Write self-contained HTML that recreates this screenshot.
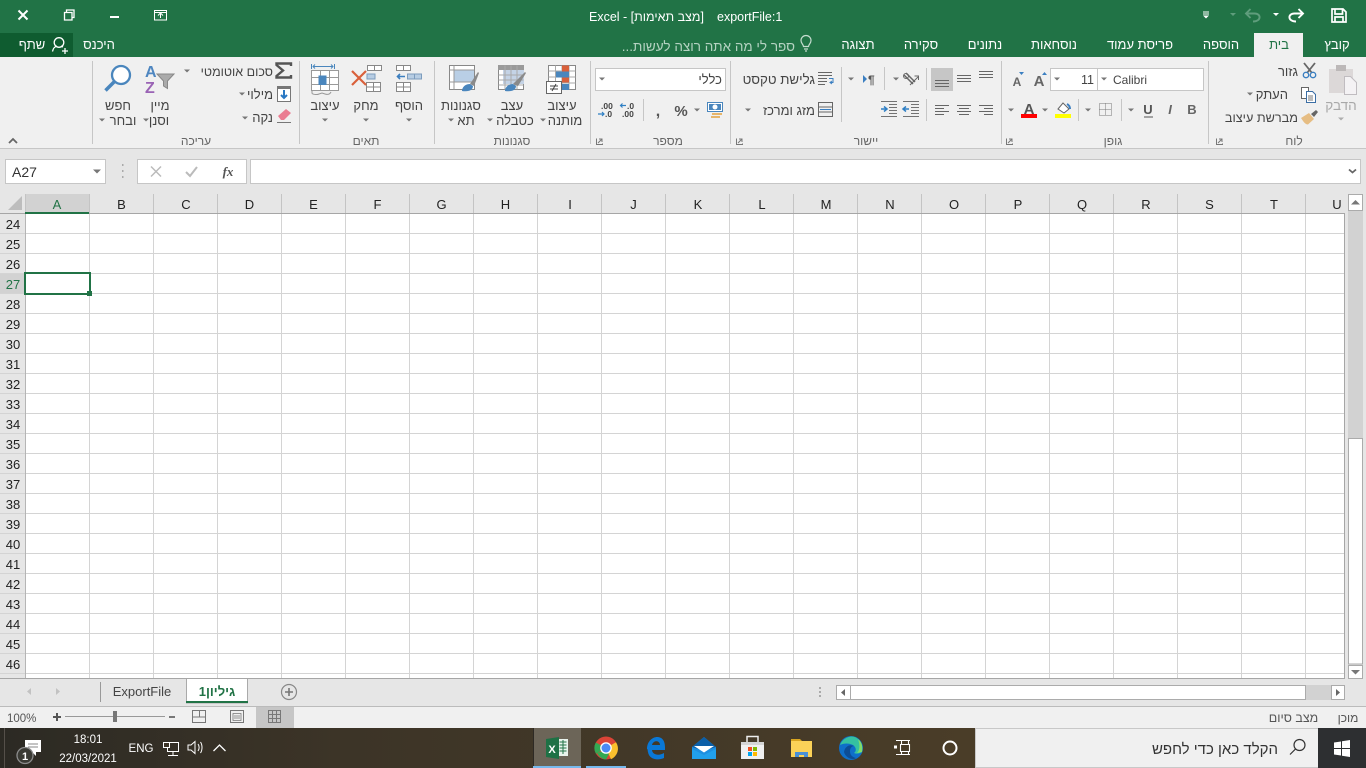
<!DOCTYPE html>
<html lang="he"><head><meta charset="utf-8"><title>Excel</title>
<style>
html,body{margin:0;padding:0;width:1366px;height:768px;overflow:hidden;background:#fff}
svg{display:block;position:absolute;left:0;top:0}
text{font-family:"Liberation Sans","DejaVu Sans",sans-serif;font-size:13px;fill:#444}
.m{text-anchor:middle}.e{text-anchor:end}
.tab{fill:#fff;text-anchor:middle;font-size:13px}
.g{fill:#666;font-size:12px;text-anchor:middle}
.h{fill:#222;text-anchor:middle;font-size:13px}
.tb{fill:#fff;font-size:11.5px;text-anchor:middle}
.d{font-size:8.5px;fill:#444;font-weight:bold}
</style></head><body>
<svg width="1366" height="768" viewBox="0 0 1366 768" xmlns="http://www.w3.org/2000/svg">
<defs>
<path id="a" d="M-3-1.500h6l-3 3z" fill="#777"/>
<linearGradient id="tbg" x1="0" x2="1" y1="0" y2="0"><stop offset="0" stop-color="#2c2a24"/><stop offset=".35" stop-color="#3c3427"/><stop offset="1" stop-color="#4a3d28"/></linearGradient>
</defs>

<!-- base colours -->
<rect width="1366" height="57" fill="#217346"/>
<rect y="57" width="1366" height="92" fill="#f0f0f0"/>
<rect y="148" width="1366" height="1" fill="#c6c6c6"/>
<rect y="149" width="1366" height="45" fill="#e6e6e6"/>

<!-- window controls -->
<path d="M18.500 10.500l9 9m0-9l-9 9" stroke="#fff" stroke-width="2" fill="none"/>
<path d="M64.500 12.500h7.500v7.500h-7.500zM66.500 12.500v-2.500h7.500v7.500h-2" stroke="#fff" fill="none" stroke-width="1.300"/>
<rect x="110" y="16" width="9" height="2" fill="#fff"/>
<path d="M154.500 10.500h12v9.500h-12zM154.500 12.500h12M160.500 18v-4M158 15.500l2.500-2.500 2.500 2.500" stroke="#fff" fill="none"/>

<!-- title -->
<text x="589" y="21" style="fill:#fff;font-size:12.500px" direction="ltr">Excel - [מצב תאימות]</text>
<text x="717" y="21" style="fill:#fff;font-size:12.500px">exportFile:1</text>

<!-- QAT -->
<path d="M1332 9h11l3 3v10h-14zM1335 9.500v4.500h7.500v-4.500M1335 22v-5h8v5" stroke="#fff" stroke-width="1.700" fill="none"/>
<path d="M1296 21.500c-8.500 0-8.500-8-1.500-8h8M1298.500 9l4.500 4.500-4.500 4.500" stroke="#fff" stroke-width="1.900" fill="none"/>
<path d="M1273 13h6l-3 3z" fill="#fff"/>
<path d="M1253 21.500c8.500 0 8.500-8 1.500-8h-8.500M1250.500 9l-4.500 4.500 4.500 4.500" stroke="#5f9d7c" stroke-width="1.900" fill="none"/>
<path d="M1230 13h6l-3 3z" fill="#5f9d7c"/>
<path d="M1203 12h6M1203 14h6" stroke="#fff"/><path d="M1203 15.500h6l-3 3z" fill="#fff"/>

<!-- tabs -->
<rect x="1254" y="33" width="49" height="24" fill="#f0f0f0"/>
<text class="tab" x="1337" y="49">קובץ</text>
<text class="tab" x="1279" y="49" style="fill:#217346">בית</text>
<text class="tab" x="1221" y="49">הוספה</text>
<text class="tab" x="1140" y="49">פריסת עמוד</text>
<text class="tab" x="1054" y="49">נוסחאות</text>
<text class="tab" x="985" y="49">נתונים</text>
<text class="tab" x="921" y="49">סקירה</text>
<text class="tab" x="858" y="49">תצוגה</text>
<text x="795" y="51" direction="rtl" style="fill:#b5d3c2;font-size:13.500px;text-anchor:start">ספר לי מה אתה רוצה לעשות...</text>
<path d="M803.500 46.500c0-2-2.500-3-2.500-6a5 5 0 0 1 10 0c0 3-2.500 4-2.500 6zM804 49h4M805 51h2" stroke="#c5dccf" fill="none" stroke-width="1.200"/>
<text class="tab" x="99" y="49">היכנס</text>
<rect y="33" width="73" height="24" fill="#0f5c30"/>
<text class="tab" x="32" y="49">שתף</text>
<circle cx="59" cy="42.500" r="4.800" fill="none" stroke="#fff" stroke-width="1.300"/>
<path d="M52.500 52.500c.5-3 2.500-5 4.500-5.500M61 47l2 1M62 52h6M65 49v6" stroke="#fff" stroke-width="1.300" fill="none" transform="translate(0 -1)"/>

<!-- group separators -->
<g fill="#c6c6c6">
<rect x="92" y="61" width="1" height="83"/><rect x="299" y="61" width="1" height="83"/><rect x="434" y="61" width="1" height="83"/><rect x="590" y="61" width="1" height="83"/><rect x="730" y="61" width="1" height="83"/><rect x="1001" y="61" width="1" height="83"/><rect x="1208" y="61" width="1" height="83"/>
<rect x="841" y="67" width="1" height="55"/><rect x="884" y="67" width="1" height="23"/><rect x="926" y="68" width="1" height="22"/><rect x="926" y="99" width="1" height="22"/><rect x="643" y="99" width="1" height="22"/><rect x="1078" y="99" width="1" height="22"/><rect x="1121" y="99" width="1" height="22"/>
</g>
<path d="M9 143l4-4 4 4" stroke="#666" stroke-width="1.800" fill="none"/>

<!-- group labels -->
<text class="g" x="196" y="145">עריכה</text>
<text class="g" x="366" y="145">תאים</text>
<text class="g" x="512" y="145">סגנונות</text>
<text class="g" x="668" y="145">מספר</text>
<text class="g" x="866" y="145">יישור</text>
<text class="g" x="1113" y="145">גופן</text>
<text class="g" x="1294" y="145">לוח</text>
<g stroke="#777" fill="none">
<path d="M596.500 138.500v6h6v-1M598 143l4-4m-3 0h3v3"/><path d="M736.500 138.500v6h6v-1M738 143l4-4m-3 0h3v3"/><path d="M1006.500 138.500v6h6v-1M1008 143l4-4m-3 0h3v3"/><path d="M1216.500 138.500v6h6v-1M1218 143l4-4m-3 0h3v3"/>
</g>

<!-- Editing -->
<path d="M291 66v-2.500h-14.500v1.500l6.500 5.500-6.500 5.500v1.500h14.500v-2.500" fill="none" stroke="#555" stroke-width="2.400"/>
<text class="e" x="273" y="76" style="font-size:12.500px">סכום אוטומטי</text><use href="#a" x="187" y="71"/>
<rect x="277.500" y="86.500" width="13" height="15" fill="#fff" stroke="#777"/><rect x="277" y="86" width="14" height="3" fill="#777"/>
<path d="M284 90v8M281 95l3 3 3-3" stroke="#2a78c3" stroke-width="2" fill="none"/>
<text class="e" x="273" y="99">מילוי</text><use href="#a" x="242" y="94"/>
<path d="M278 116l8-7 5 4-7 7h-3z" fill="#ea7d92"/><path d="M277 122.500h14" stroke="#777"/>
<text class="e" x="273" y="122">נקה</text><use href="#a" x="245" y="118"/>

<text x="145" y="77" style="font-size:16px;font-weight:bold;fill:#4e86c0">A</text>
<text x="145" y="93" style="font-size:16px;font-weight:bold;fill:#9a63b5">Z</text>
<path d="M157 74h17l-6.500 7v7.500l-4-2.500v-5z" fill="#aaa" stroke="#888"/>
<text class="m" x="160" y="110">מיין</text><text class="m" x="159" y="125">וסנן</text><use href="#a" x="146" y="120"/>

<circle cx="121" cy="75" r="9" fill="#fff" stroke="#4a86bd" stroke-width="2.300"/>
<path d="M114.500 81.500l-9 9" stroke="#4a86bd" stroke-width="3.500"/>
<text class="m" x="118" y="110">חפש</text><text class="m" x="123" y="125">ובחר</text><use href="#a" x="102" y="120"/>

<!-- Cells -->
<path d="M311.500 70.500h27v20h-27zM320.500 70.500v20M329.500 70.500v20M311.500 77.500h27M311.500 84.500h27" fill="#fff" stroke="#999"/>
<rect x="318.500" y="75.500" width="8" height="9.500" fill="#4a86bd"/>
<path d="M311.500 64v5M334.500 64v5" stroke="#4a86bd"/><path d="M313 66.500h20M315 64.500l-2 2 2 2M331 64.500l2 2-2 2" stroke="#4a86bd" fill="none"/>
<path d="M312 91v2c0 1.500 5 2 7 1l3-1 3 1c3 1 5 0 6-2" stroke="#999" fill="none"/>
<text class="m" x="325" y="110">עיצוב</text><use href="#a" x="325" y="120"/>

<g stroke="#888" fill="#fff"><path d="M367.500 65.500h14v5h-14zM374.500 65.500v5M366.500 82.500h14v9h-14zM373.500 82.500v9M366.500 87h14"/></g>
<path d="M367 74h8v5h-8z" fill="#b7cde3" stroke="#7c9cbd"/>
<path d="M352 71l14 14M366 71l-14 14" stroke="#d9603b" stroke-width="2.200"/>
<text class="m" x="366" y="110">מחק</text><use href="#a" x="366" y="120"/>

<g stroke="#888" fill="#fff"><path d="M396.500 65.500h14v5h-14zM403.500 65.500v5M396.500 82.500h14v9h-14zM403.500 82.500v9M396.500 87h14"/></g>
<path d="M407.500 74h14v5h-14zM414.500 74v5" fill="#b7cde3" stroke="#7c9cbd"/>
<path d="M405 76.500h-7M400 74l-2.500 2.500 2.500 2.500" stroke="#3c7fc0" stroke-width="1.600" fill="none"/>
<text class="m" x="409" y="110">הוסף</text><use href="#a" x="409" y="120"/>

<!-- Styles -->
<path d="M449.500 65.500h25v24h-25z" fill="#fff" stroke="#888"/>
<rect x="454" y="70" width="20" height="12" fill="#b9cfe6"/>
<path d="M449.500 70h25M449.500 82h25M454 65.500v24" stroke="#999" fill="none"/>
<path d="M462 90c1-4 4-6 8-6l3 2c0 4-4 6-11 5z" fill="#4a86bd"/><path d="M470 84l8-12 1 1-5 13" fill="#8a8a8a"/>
<text class="m" x="461" y="110">סגנונות</text><text class="m" x="466" y="125">תא</text><use href="#a" x="451" y="120"/>

<path d="M498.500 65.500h25v24h-25z" fill="#fff" stroke="#888"/>
<rect x="498" y="65" width="26" height="5" fill="#9a9a9a"/>
<rect x="503" y="70" width="21" height="14" fill="#c4d3e6"/>
<path d="M498.500 75h25M498.500 80h25M498.500 85h25M505 65.500v24M511 65.500v24M517 65.500v24" stroke="#aaa" fill="none"/>
<path d="M505 90c1-4 4-6 8-6l3 2c0 4-4 6-11 5z" fill="#4a86bd"/><path d="M513 84l12-12 1 1-8 13" fill="#8a8a8a"/>
<text class="m" x="512" y="110">עצב</text><text class="m" x="515" y="125">כטבלה</text><use href="#a" x="490" y="120"/>

<path d="M548.500 65.500h27v24h-27z" fill="#fff" stroke="#888"/>
<path d="M548.500 71h27M548.500 77h27M548.500 83h27M555.500 65.500v24M562 65.500v24M569 65.500v24" stroke="#aaa" fill="none"/>
<rect x="562" y="65.500" width="7" height="6" fill="#d9603b"/><rect x="556" y="71.500" width="13" height="6" fill="#4a86bd"/><rect x="562" y="77.500" width="7" height="5" fill="#d9603b"/><rect x="562" y="84" width="7" height="6" fill="#4a86bd"/>
<rect x="546.500" y="81.500" width="15" height="12" fill="#fff" stroke="#666"/>
<path d="M550 86h8M550 89h8M556 84l-4 7" stroke="#444" fill="none"/>
<text class="m" x="562" y="110">עיצוב</text><text class="m" x="565" y="125">מותנה</text><use href="#a" x="543" y="120"/>

<!-- Number -->
<rect x="595.500" y="68.500" width="130" height="22" fill="#fff" stroke="#c6c6c6"/>
<text class="e" x="722" y="84">כללי</text><use href="#a" x="602" y="79"/>
<rect x="707.500" y="102.500" width="15" height="9" fill="#fff" stroke="#4a86bd"/><rect x="709" y="104" width="12" height="6" fill="#4a86bd"/><circle cx="715" cy="107" r="2.500" fill="#fff"/>
<path d="M712 113h10v2h-10zM711 116h9v2h-9z" fill="#e7b56a"/>
<use href="#a" x="697" y="110"/>
<text class="m" x="681" y="116" style="font-size:15px;fill:#555;font-weight:bold">%</text>
<text class="m" x="658" y="116" style="font-size:16px;fill:#555;font-weight:bold">,</text>
<text x="627" y="109" class="d">.0</text><text x="622" y="117" class="d">.00</text>
<path d="M626 105.500h-5.500M622.500 103.500l-2 2 2 2" stroke="#2f7fc4" fill="none" stroke-width="1.200"/>
<text x="601" y="109" class="d">.00</text><text x="605" y="117" class="d">.0</text>
<path d="M598 114h6M602 112l2 2-2 2" stroke="#2f7fc4" fill="none" stroke-width="1.200"/>

<!-- Alignment -->
<text class="e" x="815" y="84" style="font-size:13.300px">גלישת טקסט</text>
<path d="M818 72.500h14M818 75.500h14M818 78.500h9M818 81.500h9M818 84.500h7" stroke="#666"/><path d="M829 78.500h4v4h-3M832 81l-2 1.500 2 1.500" stroke="#3b7fc1" fill="none"/>
<text class="e" x="815" y="115">מזג ומרכז</text><use href="#a" x="748" y="110"/>
<path d="M818.500 102.500h14v14h-14zM818.500 107h14M818.500 112h14" stroke="#666" fill="none"/><rect x="819" y="108" width="13" height="3" fill="#f0f0f0"/><path d="M820 109.500h11" stroke="#3b7fc1"/>
<use href="#a" x="851" y="79"/>
<path d="M863 75l4 4-4 4z" fill="#3b7fc1"/><text x="868" y="84" style="font-size:12px;font-weight:bold;fill:#555">¶</text>
<use href="#a" x="896" y="79"/>
<path d="M904 75l9 9M906 73l9 9" stroke="#666" stroke-width="1.500" fill="none"/><path d="M910 85l8-8M914.500 76h4v4" stroke="#666" fill="none"/><circle cx="906" cy="76" r="2.500" fill="none" stroke="#666"/>
<rect x="931" y="68" width="22" height="23" fill="#c6c6c6"/>
<g stroke="#666">
<path d="M935 80.500h14M935 83.500h14M935 86.500h14"/>
<path d="M957 75.500h14M957 78.500h14M957 81.500h14"/>
<path d="M979 71.500h14M979 74.500h14M979 77.500h14"/>
<path d="M935 105.500h14M935 108.500h9M935 111.500h14M935 114.500h9"/>
<path d="M957 105.500h14M959 108.500h10M957 111.500h14M959 114.500h10"/>
<path d="M979 105.500h14M984 108.500h9M979 111.500h14M984 114.500h9"/>
<path d="M889 104.500h8M889 107.500h8M889 110.500h8M889 113.500h8M881 116.500h16M881 101.500h16" opacity=".9"/>
<path d="M911 104.500h8M911 107.500h8M911 110.500h8M911 113.500h8M903 116.500h16M903 101.500h16" opacity=".9"/>
</g>
<path d="M881 109h5M884 106.500l3 2.500-3 2.500" stroke="#2f7fc4" stroke-width="1.500" fill="none"/>
<path d="M909 109h-6M906 106.500l-3 2.500 3 2.500" stroke="#2f7fc4" stroke-width="1.500" fill="none"/>

<!-- Font -->
<text class="m" x="1017" y="86" style="font-size:12px;font-weight:bold;fill:#666">A</text><path d="M1019 72h5l-2.500 3z" fill="#3b7fc1"/>
<text class="m" x="1039" y="86" style="font-size:15px;font-weight:bold;fill:#666">A</text><path d="M1042 75l2.500-3 2.500 3z" fill="#3b7fc1"/>
<rect x="1050.500" y="68.500" width="47" height="22" fill="#fff" stroke="#c6c6c6"/>
<rect x="1097.500" y="68.500" width="106" height="22" fill="#fff" stroke="#c6c6c6"/>
<use href="#a" x="1057" y="79"/><use href="#a" x="1104" y="79"/>
<text class="e" x="1094" y="84" style="font-size:12.500px">11</text>
<text x="1113" y="84" style="font-size:12px">Calibri</text>
<use href="#a" x="1011" y="110"/>
<text class="m" x="1029" y="114" style="font-size:15px;font-weight:bold;fill:#555">A</text><rect x="1021" y="114" width="16" height="4" fill="#f00"/>
<use href="#a" x="1045" y="110"/>
<path d="M1058 109l5-6 6 6-5 4z" fill="#fff" stroke="#666"/><path d="M1067 104c2 1 3 3 3 5" stroke="#3b7fc1" stroke-width="2" fill="none"/>
<rect x="1055" y="114" width="16" height="4" fill="#ff0"/>
<use href="#a" x="1088" y="110"/>
<rect x="1099.500" y="103.500" width="12" height="12" fill="none" stroke="#777" stroke-dasharray="1 1"/><path d="M1105.500 103.500v12M1099.500 109.500h12" stroke="#777" stroke-dasharray="1 1" fill="none"/>
<use href="#a" x="1131" y="110"/>
<text class="m" x="1148" y="114" style="font-size:13px;font-weight:bold;fill:#555">U</text><path d="M1144 117h9" stroke="#555"/>
<text class="m" x="1170" y="114" style="font-size:13px;font-weight:bold;font-style:italic;fill:#666">I</text>
<text class="m" x="1192" y="114" style="font-size:13px;font-weight:bold;fill:#666">B</text>

<!-- Clipboard -->
<path d="M1329 69h24v24h-24z" fill="#dcd8d8"/><rect x="1336" y="65" width="10" height="6" fill="#bcb8b8"/>
<path d="M1344.500 76.500h6l6 6v12h-12z" fill="#f4f2f4" stroke="#c0bcc0"/>
<text class="m" x="1341" y="110" style="fill:#a8a8a8;font-size:13.500px">הדבק</text><use href="#a" x="1341" y="119" opacity=".55"/>
<text class="e" x="1298" y="76">גזור</text>
<path d="M1304 63l8 10M1315 63l-8 10" stroke="#666" stroke-width="1.800"/><circle cx="1306" cy="75" r="2.700" fill="none" stroke="#3b7fc1" stroke-width="1.400"/><circle cx="1313" cy="75" r="2.700" fill="none" stroke="#3b7fc1" stroke-width="1.400"/>
<text class="e" x="1288" y="99">העתק</text><use href="#a" x="1250" y="94"/>
<path d="M1301.500 87.500h7v11h-7z" fill="#fff" stroke="#666"/><path d="M1306.500 91.500h6l3 3v8h-9z" fill="#fff" stroke="#3b6ea5"/><path d="M1308 96h5M1308 98h5M1308 100h5" stroke="#777"/>
<text class="e" x="1298" y="122" style="font-size:12.700px">מברשת עיצוב</text>
<path d="M1301 118l8-5 5 6-6 5.500c-3 0-5-3.500-7-6.500z" fill="#e6bd83"/><path d="M1311 114l5-4 2 2-4 5z" fill="#666"/>

<!-- Formula bar -->
<rect x="5.500" y="159.500" width="100" height="24" fill="#fff" stroke="#c6c6c6"/>
<text x="12" y="177" style="font-size:14px;fill:#333">A27</text>
<path d="M93 169.500h8l-4 4z" fill="#777"/>
<path d="M122 164h1.500v2H122zM122 170h1.500v2H122zM122 176h1.500v2H122z" fill="#aaa"/>
<rect x="137.500" y="159.500" width="109" height="24" fill="#fff" stroke="#c6c6c6"/>
<path d="M151 166.500l10 10M161 166.500l-10 10" stroke="#bbb" stroke-width="1.500"/>
<path d="M186 172l4 4 7-9" stroke="#bbb" stroke-width="2" fill="none"/>
<text class="m" x="228" y="176" style="font-family:'Liberation Serif',serif;font-style:italic;font-weight:bold;font-size:13px;fill:#555">fx</text>
<rect x="250.500" y="159.500" width="1110" height="24" fill="#fff" stroke="#c6c6c6"/>
<path d="M1349 169.500l3.500 3 3.500-3" stroke="#666" stroke-width="1.800" fill="none"/>

<!-- Sheet headers -->
<rect y="194" width="1345" height="19" fill="#e6e6e6"/>
<rect x="25" y="194" width="64" height="19" fill="#d2d2d2"/>
<path d="M22 196v14H8z" fill="#bdbdbd"/>
<g fill="#c4c4c4">
<rect x="25" y="194" width="1" height="19"/><rect x="89" y="194" width="1" height="19"/><rect x="153" y="194" width="1" height="19"/><rect x="217" y="194" width="1" height="19"/><rect x="281" y="194" width="1" height="19"/><rect x="345" y="194" width="1" height="19"/><rect x="409" y="194" width="1" height="19"/><rect x="473" y="194" width="1" height="19"/><rect x="537" y="194" width="1" height="19"/><rect x="601" y="194" width="1" height="19"/><rect x="665" y="194" width="1" height="19"/><rect x="729" y="194" width="1" height="19"/><rect x="793" y="194" width="1" height="19"/><rect x="857" y="194" width="1" height="19"/><rect x="921" y="194" width="1" height="19"/><rect x="985" y="194" width="1" height="19"/><rect x="1049" y="194" width="1" height="19"/><rect x="1113" y="194" width="1" height="19"/><rect x="1177" y="194" width="1" height="19"/><rect x="1241" y="194" width="1" height="19"/><rect x="1305" y="194" width="1" height="19"/>
</g>
<rect y="213" width="25" height="466" fill="#e6e6e6"/>
<rect y="273" width="25" height="20" fill="#d2d2d2"/>
<!-- grid lines -->
<g fill="#d4d4d4">
<rect x="89" y="213" width="1" height="466"/><rect x="153" y="213" width="1" height="466"/><rect x="217" y="213" width="1" height="466"/><rect x="281" y="213" width="1" height="466"/><rect x="345" y="213" width="1" height="466"/><rect x="409" y="213" width="1" height="466"/><rect x="473" y="213" width="1" height="466"/><rect x="537" y="213" width="1" height="466"/><rect x="601" y="213" width="1" height="466"/><rect x="665" y="213" width="1" height="466"/><rect x="729" y="213" width="1" height="466"/><rect x="793" y="213" width="1" height="466"/><rect x="857" y="213" width="1" height="466"/><rect x="921" y="213" width="1" height="466"/><rect x="985" y="213" width="1" height="466"/><rect x="1049" y="213" width="1" height="466"/><rect x="1113" y="213" width="1" height="466"/><rect x="1177" y="213" width="1" height="466"/><rect x="1241" y="213" width="1" height="466"/><rect x="1305" y="213" width="1" height="466"/>
<rect y="233" width="1344" height="1"/><rect y="253" width="1344" height="1"/><rect y="273" width="1344" height="1"/><rect y="293" width="1344" height="1"/><rect y="313" width="1344" height="1"/><rect y="333" width="1344" height="1"/><rect y="353" width="1344" height="1"/><rect y="373" width="1344" height="1"/><rect y="393" width="1344" height="1"/><rect y="413" width="1344" height="1"/><rect y="433" width="1344" height="1"/><rect y="453" width="1344" height="1"/><rect y="473" width="1344" height="1"/><rect y="493" width="1344" height="1"/><rect y="513" width="1344" height="1"/><rect y="533" width="1344" height="1"/><rect y="553" width="1344" height="1"/><rect y="573" width="1344" height="1"/><rect y="593" width="1344" height="1"/><rect y="613" width="1344" height="1"/><rect y="633" width="1344" height="1"/><rect y="653" width="1344" height="1"/><rect y="673" width="1344" height="1"/>
</g>
<rect x="25" y="213" width="1" height="466" fill="#b5b5b5"/>
<rect y="213" width="1345" height="1" fill="#a6a6a6"/>
<rect x="25" y="212" width="64" height="2" fill="#217346"/>
<rect x="1344" y="213" width="1" height="466" fill="#a6a6a6"/>
<rect y="678" width="1345" height="1" fill="#a6a6a6"/>
<!-- column letters -->
<text class="h" x="57" y="209" style="fill:#217346">A</text>
<text class="h" x="121.500" y="209">B</text><text class="h" x="186" y="209">C</text><text class="h" x="249.500" y="209">D</text><text class="h" x="313.500" y="209">E</text><text class="h" x="377.500" y="209">F</text><text class="h" x="441.500" y="209">G</text><text class="h" x="505.500" y="209">H</text><text class="h" x="570" y="209">I</text><text class="h" x="633.500" y="209">J</text><text class="h" x="698" y="209">K</text><text class="h" x="762" y="209">L</text><text class="h" x="826" y="209">M</text><text class="h" x="890" y="209">N</text><text class="h" x="954" y="209">O</text><text class="h" x="1018" y="209">P</text><text class="h" x="1082" y="209">Q</text><text class="h" x="1146" y="209">R</text><text class="h" x="1209.500" y="209">S</text><text class="h" x="1274" y="209">T</text><text class="h" x="1337" y="209">U</text>
<!-- row numbers -->
<text class="h" x="13" y="229">24</text><text class="h" x="13" y="249">25</text><text class="h" x="13" y="269">26</text><text class="h" x="13" y="289" style="fill:#217346">27</text><text class="h" x="13" y="309">28</text><text class="h" x="13" y="329">29</text><text class="h" x="13" y="349">30</text><text class="h" x="13" y="369">31</text><text class="h" x="13" y="389">32</text><text class="h" x="13" y="409">33</text><text class="h" x="13" y="429">34</text><text class="h" x="13" y="449">35</text><text class="h" x="13" y="469">36</text><text class="h" x="13" y="489">37</text><text class="h" x="13" y="509">38</text><text class="h" x="13" y="529">39</text><text class="h" x="13" y="549">40</text><text class="h" x="13" y="569">41</text><text class="h" x="13" y="589">42</text><text class="h" x="13" y="609">43</text><text class="h" x="13" y="629">44</text><text class="h" x="13" y="649">45</text><text class="h" x="13" y="669">46</text>
<!-- selection -->
<rect x="25" y="273" width="65" height="21" fill="#fff" stroke="#217346" stroke-width="2"/>
<rect x="87" y="291" width="5" height="5" fill="#217346"/>

<!-- vertical scrollbar -->
<rect x="1345" y="194" width="21" height="485" fill="#e6e6e6"/>
<rect x="1348" y="194" width="15" height="244" fill="#d2d2d2"/>
<rect x="1348.500" y="194.500" width="14" height="16" fill="#fff" stroke="#ababab"/>
<path d="M1351 204.500l4.500-4.500 4.500 4.500z" fill="#777"/>
<rect x="1348.500" y="438.500" width="14" height="225.500" fill="#fff" stroke="#ababab"/>
<rect x="1348.500" y="665.500" width="14" height="13" fill="#fff" stroke="#ababab"/>
<path d="M1351 670h9l-4.500 4.500z" fill="#777"/>

<!-- sheet tab row -->
<rect y="679" width="1366" height="28" fill="#e6e6e6"/>
<rect y="706" width="1366" height="1" fill="#bbb"/>
<path d="M31 688v7l-4-3.500z" fill="#c2c2c2"/><path d="M56 688v7l4-3.500z" fill="#c2c2c2"/>
<rect x="100" y="682" width="1" height="20" fill="#999"/>
<text class="m" x="142" y="696" style="font-size:13px;fill:#444">ExportFile</text>
<path d="M186.500 679v24h61v-24" fill="#fff" stroke="#aaa"/>
<rect x="186" y="701" width="62" height="2" fill="#217346"/>
<text class="m" x="217" y="696" style="font-size:13px;font-weight:bold;fill:#217346">גיליון1</text>
<circle cx="289" cy="692" r="7.500" fill="none" stroke="#888" stroke-width="1.200"/><path d="M285 692h8M289 688v8" stroke="#777" stroke-width="1.600"/>
<path d="M819 687h2v2h-2zM819 691h2v2h-2zM819 695h2v2h-2z" fill="#aaa"/>
<rect x="836.500" y="685.500" width="14" height="14" fill="#fff" stroke="#ababab"/>
<path d="M845 689v7l-4-3.500z" fill="#666"/>
<rect x="850.500" y="685.500" width="455" height="14" fill="#fff" stroke="#ababab"/>
<rect x="1306" y="685" width="25" height="15" fill="#d2d2d2"/>
<rect x="1331.500" y="685.500" width="13" height="14" fill="#fff" stroke="#ababab"/>
<path d="M1336 689v7l4-3.500z" fill="#666"/>

<!-- status bar -->
<rect y="707" width="1366" height="21" fill="#f0f0f0"/>
<text x="7" y="722" style="font-size:11.500px;fill:#555">100%</text>
<path d="M53 717h8M57 713v8" stroke="#555" stroke-width="2"/>
<rect x="65" y="716" width="100" height="1" fill="#999"/>
<rect x="113" y="711" width="4" height="11" fill="#777"/>
<rect x="169" y="716" width="6" height="2" fill="#777"/>
<path d="M192.500 710.500h13v12h-13zM199.500 710.500v6.500h-7M199.500 717h6" fill="none" stroke="#777"/>
<path d="M230.500 710.500h13v12h-13z" fill="none" stroke="#777"/><path d="M233 713.500h8v7h-8zM234 716h6M234 718h6" fill="none" stroke="#777" stroke-width=".8"/>
<rect x="256" y="707" width="38" height="21" fill="#c6c6c6"/>
<path d="M268.500 710.500h12v12h-12zM268.500 714.500h12M268.500 718.500h12M272.500 710.500v12M276.500 710.500v12" fill="none" stroke="#777"/>
<text class="m" x="1348" y="722" style="font-size:12px;fill:#555">מוכן</text>
<text class="m" x="1293.500" y="722" style="font-size:12.500px;fill:#555">מצב סיום</text>

<!-- taskbar -->
<rect y="728" width="975" height="40" fill="url(#tbg)"/>
<rect x="4" y="728" width="1" height="40" fill="#55504a"/>
<path d="M25 740h16v12h-5v4l-4-4h-7z" fill="#fff"/><path d="M28 744h10M28 747h10" stroke="#888"/>
<circle cx="25" cy="755.500" r="8" fill="#3a3a34" stroke="#8c8c8c" stroke-width="1.300"/>
<text class="tb" x="25" y="760" style="font-size:11px;font-weight:bold">1</text>
<text class="tb" x="88" y="743">18:01</text>
<text class="tb" x="88" y="762">22/03/2021</text>
<text class="tb" x="141" y="752">ENG</text>
<path d="M167.500 743.500h11v9h-11zM173 752.500v3.500M168 756.500h10" fill="none" stroke="#fff" transform="translate(0 -1)"/>
<rect x="163.500" y="742.500" width="6" height="5" fill="#3c3427" stroke="#fff"/>
<path d="M188 745h3l4-3.500v12L191 750h-3zM198 744c1.500 2 1.500 5 0 7M200.500 742c2 3 2 8 0 11" fill="none" stroke="#fff" stroke-width="1"/>
<path d="M213.500 751l6-6 6 6" stroke="#fff" stroke-width="1.300" fill="none"/>

<rect x="533" y="728" width="48" height="40" fill="#6c6558"/>
<rect x="533" y="728" width="1" height="40" fill="#2e2a24"/>
<rect x="533" y="766" width="48" height="2" fill="#76b9ed"/>
<rect x="586" y="766" width="40" height="2" fill="#76b9ed"/>
<!-- Excel -->
<rect x="556" y="739" width="12" height="17" fill="#e8f3ec"/><path d="M559.500 742h7M559.500 745h7M559.500 748h7M559.500 751h7M563 740v14" stroke="#217346"/>
<path d="M546 739l13-2v22l-13-2z" fill="#1e7145"/>
<text class="m" x="552" y="753" style="font-size:11px;font-weight:bold;fill:#fff">X</text>
<!-- Chrome -->
<circle cx="606" cy="748" r="11.500" fill="#db4437"/>
<path d="M606 748l-10 5.800a11.500 11.500 0 0 1-.2-11.300z" fill="#34a853"/><path d="M597 753a11.500 11.500 0 0 0 9 6.500l6-11z" fill="#34a853"/>
<path d="M606 748l10-5.800a11.500 11.500 0 0 1-5 17z" fill="#fbc02d"/>
<circle cx="606" cy="748" r="5.800" fill="#fff"/><circle cx="606" cy="748" r="4.500" fill="#4a8af4"/>
<!-- Edge legacy -->
<path d="M647 749c0-8 6-12 10-12 6 0 8 5 8 10v3h-13c.5 5 7 6 12 3v5c-7 3-15 1-16-6-.5-1 0-3-1-3zM652 745h8c0-5-7-5-8 0z" fill="#0a78d7" fill-rule="evenodd"/>
<!-- Mail -->
<path d="M692 747l12-10 12 10v12h-24z" fill="#1e8fe0"/><path d="M692 747l12-10 12 10-12 4z" fill="#0c5fa8"/><path d="M694 746h20l-10 6.500z" fill="#fff"/><path d="M692 749l12 6 12-6v10h-24z" fill="#21a0ec"/>
<!-- Store -->
<rect x="741" y="742" width="23" height="17" fill="#f0f0f0"/><rect x="741" y="742" width="23" height="3" fill="#d5d5d5"/>
<path d="M747 742v-5.500h11v5.500" fill="none" stroke="#eee" stroke-width="1.500"/>
<rect x="748" y="747" width="4" height="4" fill="#f25022"/><rect x="753" y="747" width="4" height="4" fill="#7fba00"/><rect x="748" y="752" width="4" height="4" fill="#00a4ef"/><rect x="753" y="752" width="4" height="4" fill="#ffb900"/>
<!-- Explorer -->
<path d="M791 739h9l2 2h10v5h-21z" fill="#d9a520"/><rect x="791" y="741" width="21" height="16" fill="#fbd258"/>
<path d="M795 757v-5h13v5h-4v-2h-5v2z" fill="#4a90d6"/>
<!-- Edge new -->
<circle cx="851" cy="748" r="12" fill="#0f6fc9"/>
<path d="M840 745c3-8 13-11 18-6 4 3 5 8 4 13-3 2-6 2-8 1 3-2 2-6-1-8-4-2-9-2-13 0z" fill="#35c1a1"/>
<path d="M858 739c4 3 5 8 4 13l-5 1c3-3 3-8 1-14z" fill="#7fdc6b"/>
<path d="M844 752c1 4 5 7 9 7 2 0 3-1 3-1-4-1-6-3-6-7 0-3 2-5 4-5-4-2-9 0-10 6z" fill="#0c4d96"/>
<!-- Task view -->
<path d="M896 740.500h14M900.500 744.500h9v7h-9zM896 754.500h14M901.500 740.500v4M908.500 740.500v4M901.500 751.500v3M908.500 751.500v3" fill="none" stroke="#fff" stroke-width="1.100"/>
<rect x="894" y="745.500" width="3" height="3" fill="#fff"/>
<circle cx="950" cy="748" r="6.500" fill="none" stroke="#fff" stroke-width="2"/>

<!-- search -->
<rect x="975" y="728" width="343" height="40" fill="#f0f0f0"/>
<path d="M975.500 768v-39.500H1318M975 767.500h343" fill="none" stroke="#c8c8c8"/>
<text class="e" x="1278" y="754" style="font-size:15px;fill:#333">הקלד כאן כדי לחפש</text>
<circle cx="1299.500" cy="745" r="5.500" fill="none" stroke="#333" stroke-width="1.200"/><path d="M1295.500 749l-5.500 5.500" stroke="#333" stroke-width="1.200"/>
<rect x="1318" y="728" width="48" height="40" fill="#2d2f31"/>
<path d="M1334 742.500l7-1v6.500h-7zM1342 741.300l8-1.300v8h-8zM1334 749h7v6.500l-7-1zM1342 749h8v8l-8-1.300z" fill="#fff"/>
</svg>
</body></html>
